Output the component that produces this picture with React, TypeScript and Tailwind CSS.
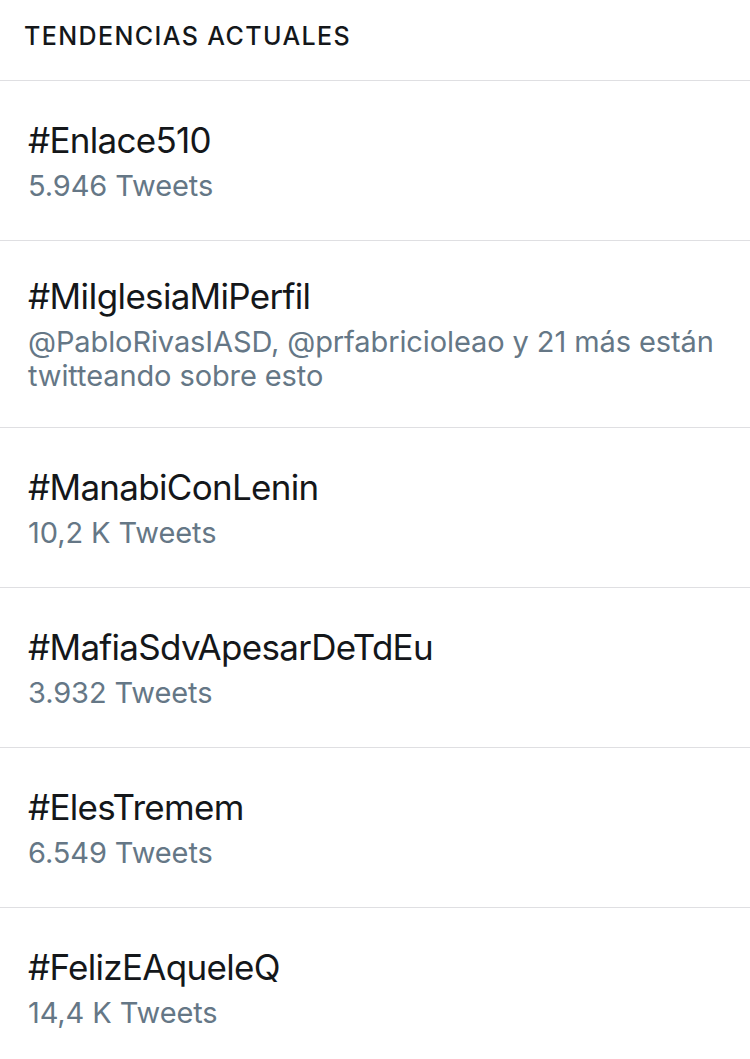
const trends = [
  { tag: '#Enlace510', meta: '5.946 Tweets' },
  {
    tag: '#MiIglesiaMiPerfil',
    meta: '@PabloRivasIASD, @prfabricioleao y 21 más están twitteando sobre esto',
  },
  { tag: '#ManabiConLenin', meta: '10,2 K Tweets' },
  { tag: '#MafiaSdvApesarDeTdEu', meta: '3.932 Tweets' },
  { tag: '#ElesTremem', meta: '6.549 Tweets' },
  { tag: '#FelizEAqueleQ', meta: '14,4 K Tweets' },
];

export default function App() {
  return (
    <div className="min-h-[1059px] w-[750px] overflow-hidden bg-white font-['Inter','Liberation_Sans',sans-serif]">
      <header className="h-[81px] border-b border-[#dfdfe2] pl-[24px] pt-[21px]">
        <h1 className="text-[25px] font-medium leading-[30px] tracking-[1.4px] text-[#14171a]">
          TENDENCIAS ACTUALES
        </h1>
      </header>

      <ul>
        {trends.map((trend) => (
          <li
            key={trend.tag}
            className="flex min-h-[160px] flex-col justify-center border-b border-[#dfdfe2] py-[34px] pl-[28px] pr-[24px]"
          >
            <p className="text-[35px] leading-[42px] tracking-[-0.7px] text-[#14171a]">
              {trend.tag}
            </p>
            <p className="mt-[8px] text-[29px] leading-[34px] tracking-[-0.1px] text-[#657786]">
              {trend.meta}
            </p>
          </li>
        ))}
      </ul>
    </div>
  );
}
